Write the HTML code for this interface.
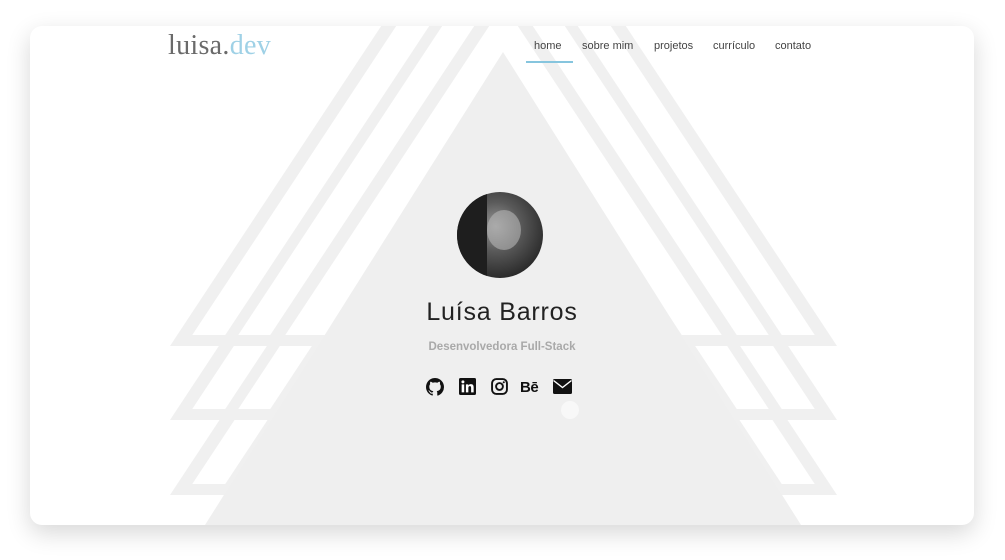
<!DOCTYPE html>
<html><head><meta charset="utf-8"><style>
html,body{margin:0;padding:0;width:1005px;height:560px;background:#fff;overflow:hidden;font-family:"Liberation Sans",sans-serif}
.card{position:absolute;left:30px;top:26px;width:944px;height:499px;border-radius:12px;background:#fff;box-shadow:0 8px 24px rgba(0,0,0,.16);overflow:hidden}
svg.bg{position:absolute;left:-30px;top:-26px}
.logo{position:absolute;left:138px;top:4px;font-family:"Liberation Serif",serif;font-size:28px;letter-spacing:0.3px;color:#6a6a6a}
.logo span{color:#9fd1e6}
.nav{position:absolute;top:14px;font-size:11px;color:#444}
.ul{position:absolute;left:496px;top:35px;width:47px;height:2px;background:#86c5de}
.av{position:absolute;left:427px;top:166px;width:86px;height:86px;border-radius:50%;background:radial-gradient(circle at 45% 40%,#9a9a9a 0,#5a5a5a 35%,#2a2a2a 75%);overflow:hidden}
.name{position:absolute;left:0;width:944px;top:272px;text-align:center;font-size:25px;color:#222;letter-spacing:.8px}
.sub{position:absolute;left:0;width:944px;top:315px;text-align:center;font-size:11.5px;font-weight:bold;color:#a9a9a9}
.ic{position:absolute;top:352px}
</style></head><body>
<div class="card">
<svg class="bg" width="1005" height="560" id="bg"></svg>
<div class="logo">luisa.<span>dev</span></div>
<div class="nav" style="left:504px">home</div>
<div class="nav" style="left:552px">sobre mim</div>
<div class="nav" style="left:624px">projetos</div>
<div class="nav" style="left:683px">currículo</div>
<div class="nav" style="left:745px">contato</div>
<div class="ul"></div>
<div class="av"><div style="position:absolute;left:30px;top:18px;width:34px;height:40px;border-radius:50%;background:#b5b5b5;opacity:.6"></div><div style="position:absolute;left:0;top:0;width:30px;height:86px;background:#1e1e1e"></div></div>
<div class="name">Luísa Barros</div>
<div class="sub">Desenvolvedora Full-Stack</div>
<svg class="ic" style="left:396px" width="18" height="18" viewBox="0 0 16 16"><path fill="#111" d="M8 0C3.58 0 0 3.58 0 8c0 3.54 2.29 6.530 5.47 7.59.4.07.55-.17.55-.38v-1.33c-2.23.48-2.7-1.07-2.7-1.07-.36-.92-.89-1.17-.89-1.17-.73-.5.06-.49.06-.49.8.06 1.23.83 1.23.83.72 1.23 1.88.87 2.340.67.07-.52.28-.87.51-1.07-1.78-.2-3.64-.89-3.64-3.95 0-.87.31-1.59.82-2.15-.08-.2-.36-1.02.08-2.12 0 0 .67-.21 2.2.82a7.6 7.6 0 014 0c1.53-1.04 2.2-.82 2.2-.82.44 1.1.16 1.92.08 2.12.51.56.82 1.27.82 2.15 0 3.07-1.87 3.75-3.65 3.95.29.25.54.73.54 1.48v2.2c0 .21.15.46.55.38A8 8 0 0016 8c0-4.42-3.58-8-8-8z"/></svg>
<svg class="ic" style="left:429px" width="17" height="17" viewBox="0 0 16 16"><rect width="16" height="16" rx="1.5" fill="#111"/><rect x="2.5" y="6" width="2.4" height="7.5" fill="#fff"/><circle cx="3.7" cy="3.6" r="1.4" fill="#fff"/><path fill="#fff" d="M6.5 6h2.3v1.1c.4-.7 1.2-1.3 2.4-1.3 2.2 0 2.6 1.4 2.6 3.3v4.4h-2.4V9.6c0-.9 0-2-1.2-2s-1.4.9-1.4 1.9v4H6.5z"/></svg>
<svg class="ic" style="left:461px" width="17" height="17" viewBox="0 0 16 16"><rect x="1" y="1" width="14" height="14" rx="4" fill="none" stroke="#111" stroke-width="1.8"/><circle cx="8" cy="8" r="3.2" fill="none" stroke="#111" stroke-width="1.8"/><circle cx="12" cy="4" r="1" fill="#111"/></svg>
<div class="ic" style="left:490px;top:353px;font-size:15px;font-weight:bold;color:#111;letter-spacing:-.5px">Bē</div>
<svg class="ic" style="left:523px;top:353px" width="19" height="15" viewBox="0 0 19 15"><rect width="19" height="15" rx="1.5" fill="#111"/><path d="M0.5 1.5L9.5 8.5L18.5 1.5" fill="none" stroke="#fff" stroke-width="1.4"/></svg>
</div>
<script>
var s=document.getElementById('bg'),ns='http://www.w3.org/2000/svg',k=0.66;
function tri(y,x0,c){var ax=503.5,ay=y-(ax-x0)/k;var p=document.createElementNS(ns,'polygon');
p.setAttribute('points',x0+','+y+' '+(1007-x0)+','+y+' '+ax+','+ay);p.setAttribute('fill',c);s.appendChild(p);}
var rows=[495,420,346],hs=[15,48,61,93,108,148];
rows.forEach(function(yb){tri(yb,170,'#f0f0f0');var y=yb-11,e=170+11*k;
hs.forEach(function(h,i){tri(y,e+h,i%2?'#f0f0f0':'#fff');});});
var p=document.createElementNS(ns,'polygon');p.setAttribute('points','205,525 801,525 503,52');p.setAttribute('fill','#efefef');s.appendChild(p);
var c=document.createElementNS(ns,'circle');c.setAttribute('cx',570);c.setAttribute('cy',410);c.setAttribute('r',9);c.setAttribute('fill','#f8f8f8');s.appendChild(c);
</script>
</body></html>
